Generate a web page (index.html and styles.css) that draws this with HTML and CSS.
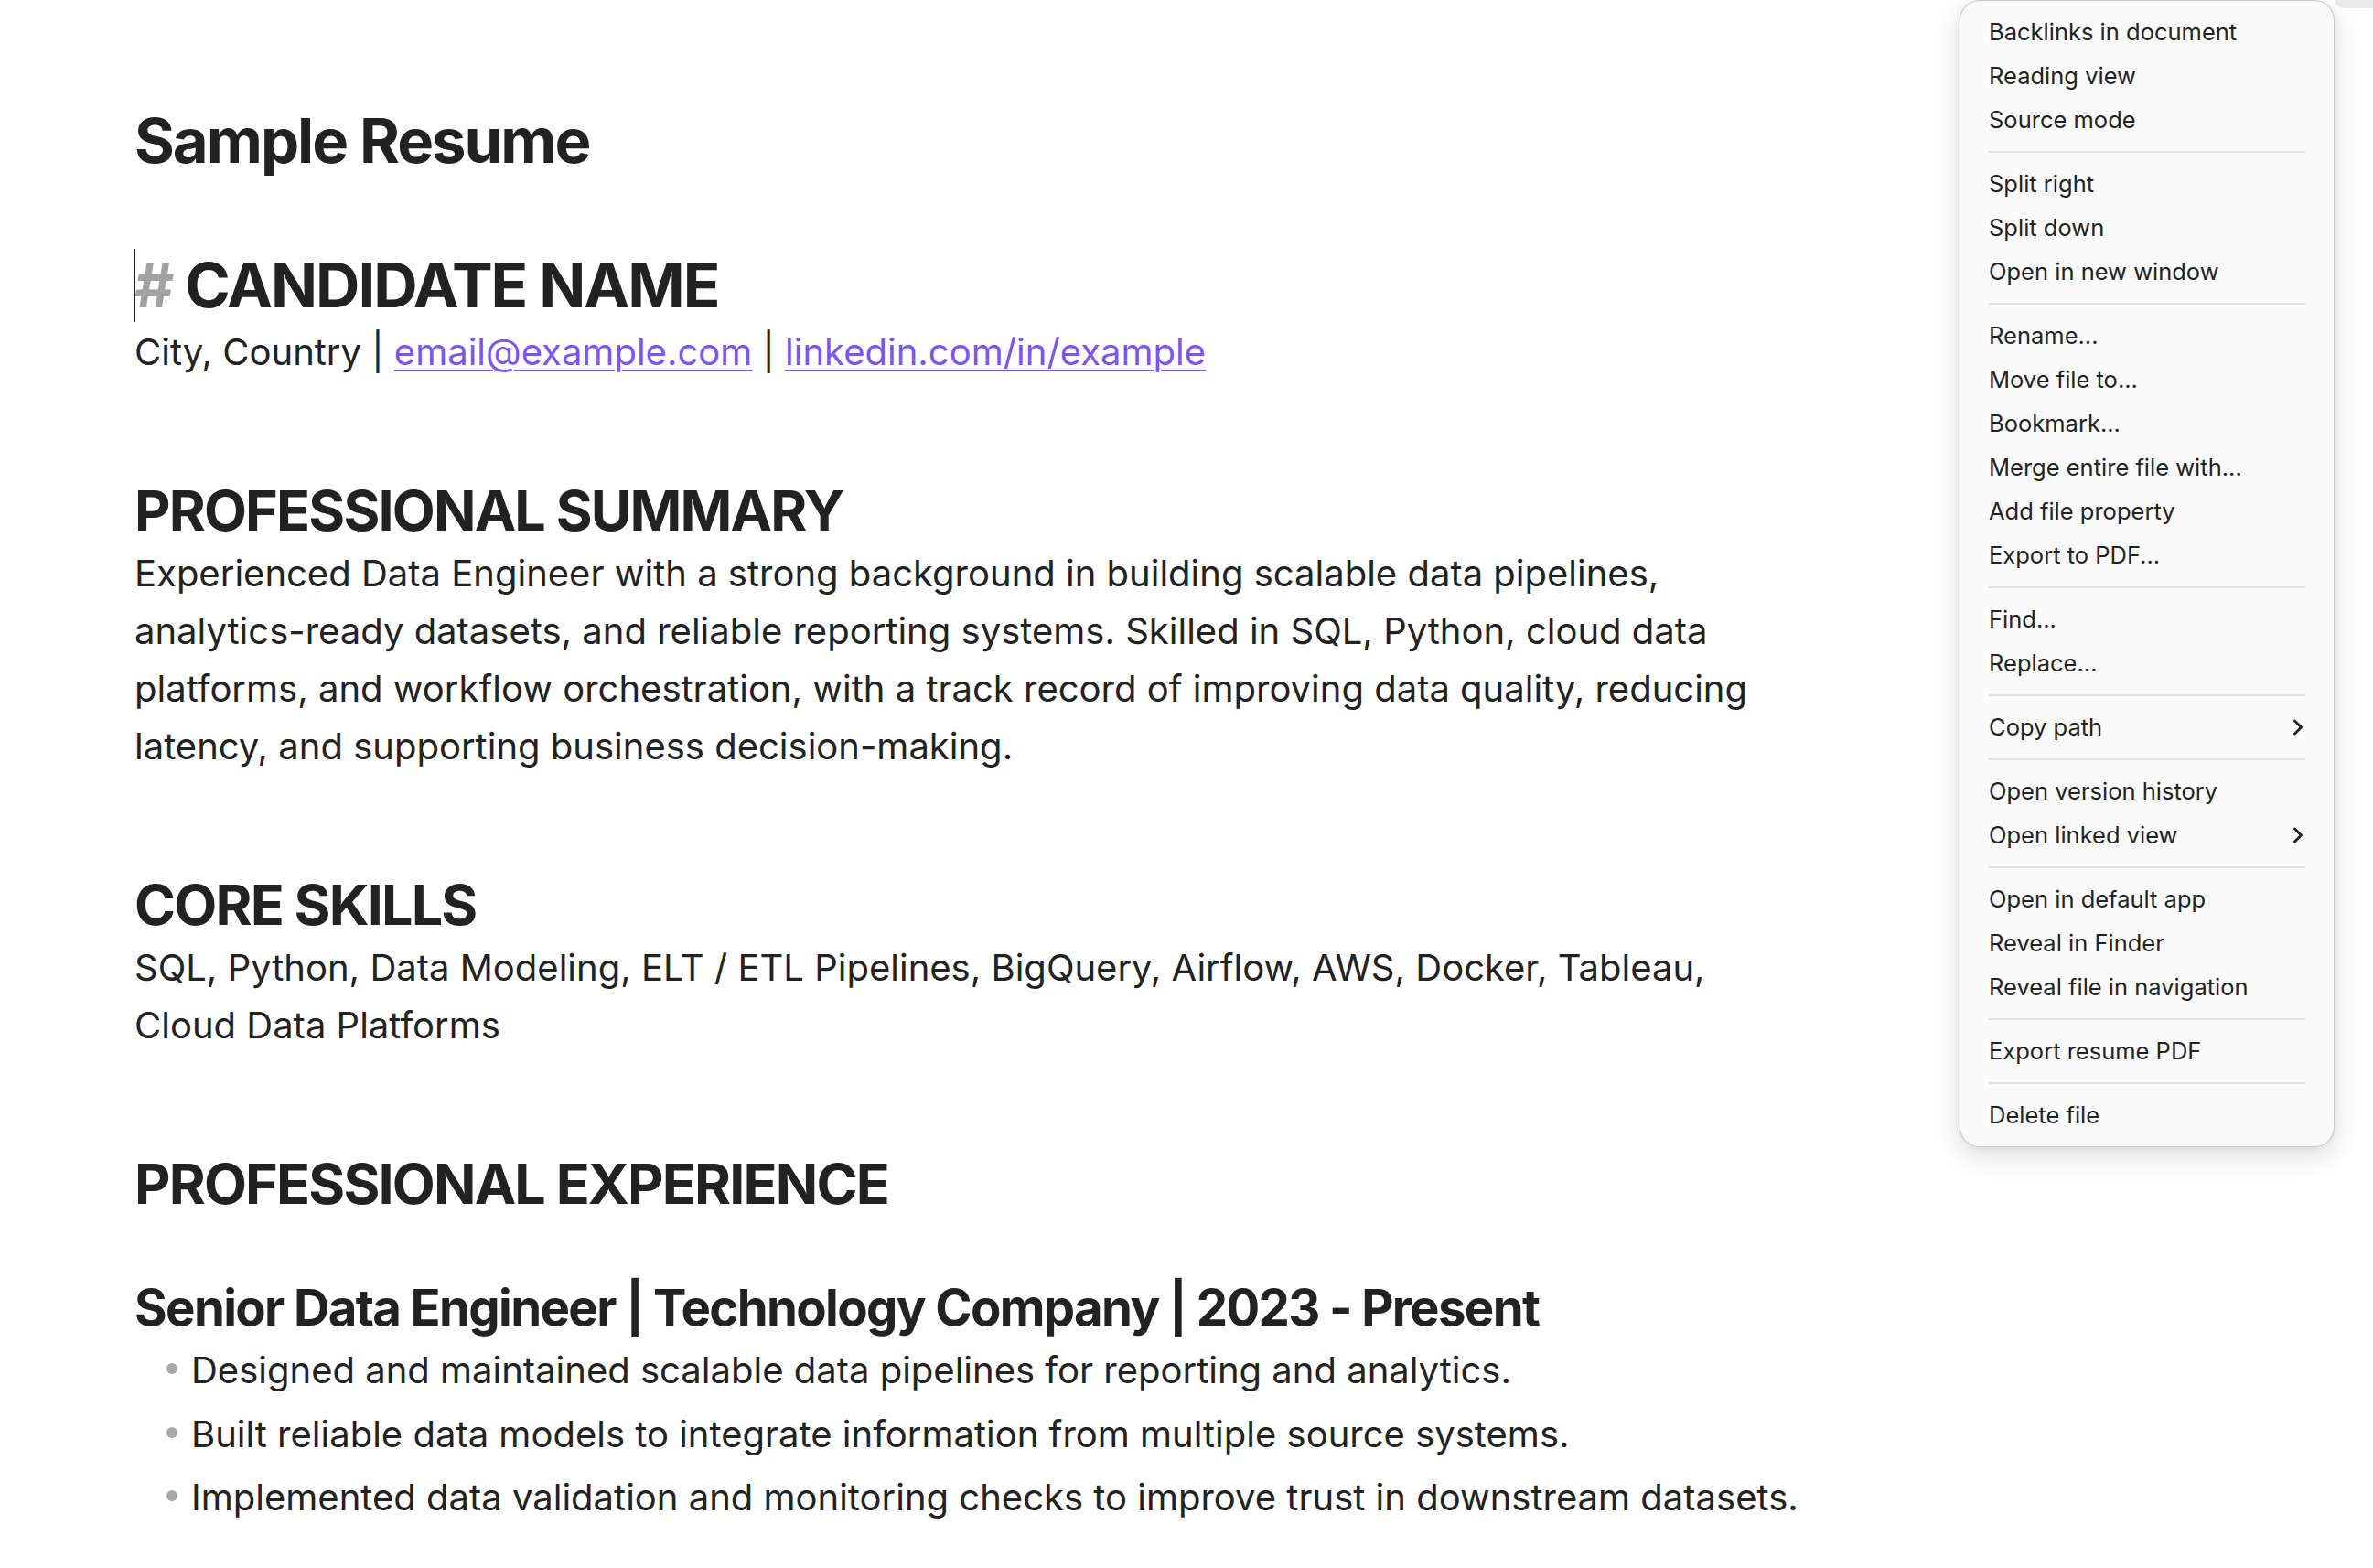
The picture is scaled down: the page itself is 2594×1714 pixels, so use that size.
FILE: index.html
```html
<!DOCTYPE html>
<html lang="en">
<head>
<meta charset="utf-8">
<title>Sample Resume</title>
<link rel="stylesheet" href="styles.css">
</head>
<body>
<div class="corner-tab"></div>
<main class="doc">
  <div class="inline-title">Sample Resume</div>
  <h1 class="h1"><span class="caret"></span><span class="hash">#</span> CANDIDATE NAME</h1>
  <p class="contact">City, Country | <a href="#">email@example.com</a> | <a href="#">linkedin.com/in/example</a></p>

  <h2 class="h2">PROFESSIONAL SUMMARY</h2>
  <p class="body">Experienced Data Engineer with a strong background in building scalable data pipelines, <span class="nowrap">analytics-ready</span> datasets, and reliable reporting systems. Skilled in SQL, Python, cloud data platforms, and workflow orchestration, with a track record of improving data quality, reducing latency, and supporting business decision-making.</p>

  <h2 class="h2">CORE SKILLS</h2>
  <p class="body">SQL, Python, Data Modeling, ELT / ETL Pipelines, BigQuery, Airflow, AWS, Docker, Tableau, Cloud Data Platforms</p>

  <h2 class="h2">PROFESSIONAL EXPERIENCE</h2>
  <h3 class="h3">Senior Data Engineer | Technology Company | 2023 - Present</h3>
  <ul class="bullets">
    <li>Designed and maintained scalable data pipelines for reporting and analytics.</li>
    <li>Built reliable data models to integrate information from multiple source systems.</li>
    <li>Implemented data validation and monitoring checks to improve trust in downstream datasets.</li>
  </ul>
</main>

<nav class="menu">
  <div class="item">Backlinks in document</div>
  <div class="item">Reading view</div>
  <div class="item">Source mode</div>
  <div class="sep"></div>
  <div class="item">Split right</div>
  <div class="item">Split down</div>
  <div class="item">Open in new window</div>
  <div class="sep"></div>
  <div class="item">Rename...</div>
  <div class="item">Move file to...</div>
  <div class="item">Bookmark...</div>
  <div class="item">Merge entire file with...</div>
  <div class="item">Add file property</div>
  <div class="item">Export to PDF...</div>
  <div class="sep"></div>
  <div class="item">Find...</div>
  <div class="item">Replace...</div>
  <div class="sep"></div>
  <div class="item">Copy path<svg class="chev" viewBox="0 0 14 20" width="14" height="20"><path d="M3.5 3 L10.5 10 L3.5 17" fill="none" stroke="#262626" stroke-width="3" stroke-linecap="round" stroke-linejoin="round"/></svg></div>
  <div class="sep"></div>
  <div class="item">Open version history</div>
  <div class="item">Open linked view<svg class="chev" viewBox="0 0 14 20" width="14" height="20"><path d="M3.5 3 L10.5 10 L3.5 17" fill="none" stroke="#262626" stroke-width="3" stroke-linecap="round" stroke-linejoin="round"/></svg></div>
  <div class="sep"></div>
  <div class="item">Open in default app</div>
  <div class="item">Reveal in Finder</div>
  <div class="item">Reveal file in navigation</div>
  <div class="sep"></div>
  <div class="item">Export resume PDF</div>
  <div class="sep"></div>
  <div class="item">Delete file</div>
</nav>
</body>
</html>
```
FILE: styles.css
```css
html, body {
  margin: 0;
  padding: 0;
  background: #ffffff;
}
body {
  width: 2594px;
  height: 1714px;
  overflow: hidden;
  position: relative;
  font-family: "Inter", "Noto Sans", sans-serif;
  color: #222222;
}

.doc {
  padding: 114px 0 0 147px;
  width: 1828px;
}

.inline-title {
  font-size: 67px;
  line-height: 80px;
  font-weight: 700;
  letter-spacing: -0.03em;
}

.h1 {
  position: relative;
  margin: 78px 0 0 0;
  font-size: 67px;
  line-height: 80px;
  font-weight: 700;
  letter-spacing: -0.03em;
}
.hash {
  color: #a3a3a3;
}
.caret {
  position: absolute;
  left: -1px;
  top: 0;
  width: 2px;
  height: 80px;
  background: #222;
}

.h2 {
  margin: 105px 0 0 0;
  font-size: 61px;
  line-height: 74px;
  font-weight: 700;
  letter-spacing: -0.03em;
}

.contact, .body {
  margin: 0;
  font-size: 40px;
  line-height: 63px;
}
.contact {
  margin-top: 1px;
}
.body {
  margin-top: 0;
}
.nowrap {
  white-space: nowrap;
}
.contact a {
  color: #7b55ee;
  text-decoration: underline;
  text-decoration-thickness: 2px;
  text-underline-offset: 5px;
}

.h3 {
  margin: 64px 0 0 0;
  font-size: 54.5px;
  line-height: 68px;
  font-weight: 700;
  letter-spacing: -0.03em;
}

.bullets {
  list-style: none;
  margin: 0;
  padding: 0 0 0 62px;
  font-size: 40px;
  line-height: 69.5px;
}
.bullets li {
  position: relative;
}
.bullets li::before {
  content: "";
  position: absolute;
  left: -27px;
  top: 27px;
  width: 12px;
  height: 12px;
  border-radius: 50%;
  background: #a8a8a8;
}

.corner-tab {
  position: absolute;
  right: 0;
  top: 0;
  width: 41px;
  height: 9px;
  background: #ececec;
  border-bottom-left-radius: 10px;
}

.menu {
  position: absolute;
  left: 2142px;
  top: 0;
  width: 408px;
  padding: 10px 0;
  background: #fafafa;
  border: 1px solid rgba(0, 0, 0, 0.2);
  border-radius: 22px;
  box-shadow: 0 10px 34px rgba(0, 0, 0, 0.13), 0 2px 8px rgba(0, 0, 0, 0.06);
}
.item {
  display: flex;
  align-items: center;
  justify-content: space-between;
  height: 48px;
  padding: 0 32px 0 31px;
  font-size: 25.5px;
  line-height: 48px;
  color: #222;
}
.chev {
  display: block;
}
.sep {
  height: 2px;
  margin: 10px 31px;
  background: #e2e2e2;
}
```
